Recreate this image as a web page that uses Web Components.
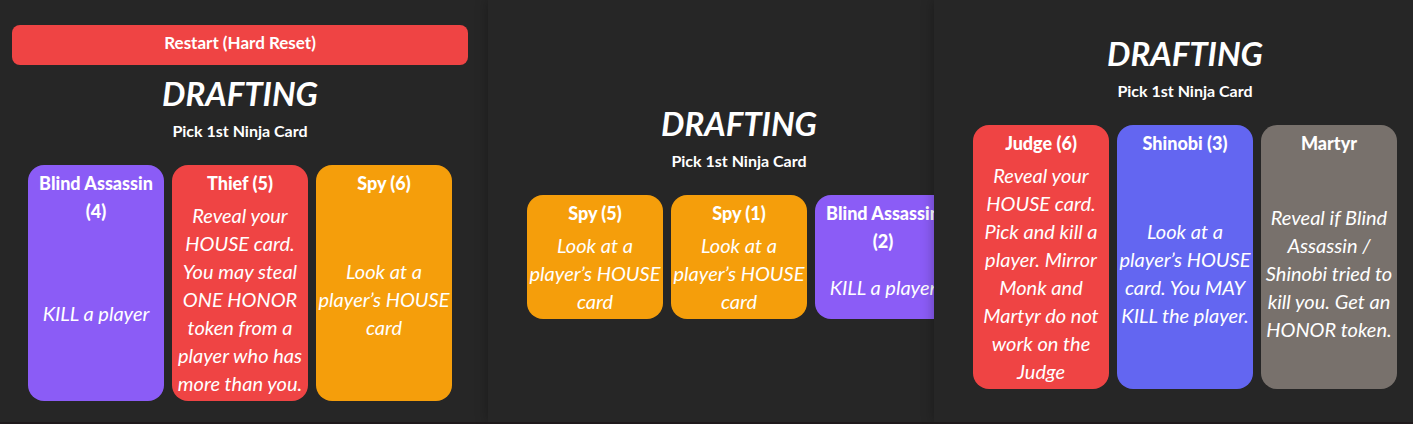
<!DOCTYPE html>
<html lang="en">
<head>
<meta charset="utf-8">
<title>Drafting</title>
<style>
  html, body { margin: 0; height: 100%; }
  body {
    background: #262626;
    color: #fff;
    font-family: Lato, "Liberation Sans", sans-serif;
    font-size: 20px;
    line-height: 28px;
    overflow: hidden;
  }
</style>
</head>
<body>
<draft-board>
  <draft-panel class="first">
    <reset-button slot="action">Restart (Hard Reset)</reset-button>
    <ninja-card color="violet" name="Blind Assassin (4)">KILL a player</ninja-card>
    <ninja-card color="red" name="Thief (5)">Reveal your HOUSE card. You may steal ONE HONOR token from a player who has more than you.</ninja-card>
    <ninja-card color="amber" name="Spy (6)">Look at a player’s HOUSE card</ninja-card>
  </draft-panel>
  <draft-panel class="second">
    <ninja-card color="amber" name="Spy (5)">Look at a player’s HOUSE card</ninja-card>
    <ninja-card color="amber" name="Spy (1)">Look at a player’s HOUSE card</ninja-card>
    <ninja-card color="violet" name="Blind Assassin (2)">KILL a player</ninja-card>
  </draft-panel>
  <draft-panel class="third">
    <ninja-card color="red" name="Judge (6)">Reveal your HOUSE card. Pick and kill a player. Mirror Monk and Martyr do not work on the Judge</ninja-card>
    <ninja-card color="indigo" name="Shinobi (3)">Look at a player’s HOUSE card. You MAY KILL the player.</ninja-card>
    <ninja-card color="stone" name="Martyr">Reveal if Blind Assassin / Shinobi tried to kill you. Get an HONOR token.</ninja-card>
  </draft-panel>
</draft-board>

<template id="board">
  <style>
    :host {
      display: grid;
      grid-template-columns: 488fr 446fr 479fr;
      min-height: 100vh;
      box-sizing: border-box;
      border-bottom: 2px solid #231e20;
    }
    ::slotted(draft-panel) { box-shadow: 0 0 12px rgba(0, 0, 0, .3); }
    ::slotted(.first) { --top: 25px; --stage: 480px; }
    ::slotted(.second) { --top: 103px; --stage: 502px; }
    ::slotted(.third) { --top: 33px; --stage: 502px; }
  </style>
  <slot></slot>
</template>

<template id="panel">
  <style>
    :host { display: block; min-width: 0; background: #262626; position: relative; }
    .clip { overflow: hidden; }
    .stage {
      width: var(--stage);
      box-sizing: border-box;
      padding: var(--top) 12px 20px;
      text-align: center;
    }
    h1 { margin: 0; font-size: 33px; line-height: 40px; font-weight: 700; font-style: italic; }
    p { margin: 4px 0 20px; font-size: 16px; line-height: 28px; font-weight: 700; }
    .cards { display: flex; justify-content: center; gap: 8px; }
  </style>
  <div class="clip">
    <section class="stage">
      <slot name="action"></slot>
      <h1>DRAFTING</h1>
      <p>Pick 1st Ninja Card</p>
      <div class="cards"><slot></slot></div>
    </section>
  </div>
</template>

<template id="reset">
  <style>
    :host { display: block; margin-bottom: 8px; }
    button {
      display: block;
      width: 100%;
      height: 40px;
      border: 0;
      border-radius: 8px;
      padding: 0 8px 4px;
      background: #ef4444;
      color: inherit;
      font: inherit;
      font-size: 17px;
      font-weight: 700;
      cursor: pointer;
    }
  </style>
  <button type="button"><slot></slot></button>
</template>

<template id="card">
  <style>
    :host { display: flex; flex: 0 0 136px; }
    :host([color="violet"]) { --fill: #8b5cf6; }
    :host([color="red"]) { --fill: #ef4444; }
    :host([color="amber"]) { --fill: #f59e0b; }
    :host([color="indigo"]) { --fill: #6366f1; }
    :host([color="stone"]) { --fill: #78716c; }
    button {
      display: flex;
      flex-direction: column;
      gap: 4px;
      width: 100%;
      border: 0;
      border-radius: 16px;
      padding: 4px 0;
      background: var(--fill);
      color: inherit;
      font: inherit;
      text-align: center;
      cursor: pointer;
    }
    .name { font-weight: 900; font-size: 18px; padding: 0 4px; align-self: stretch; }
    .text { flex: 1; display: flex; align-items: center; justify-content: center; align-self: stretch; font-style: italic; }
  </style>
  <button type="button">
    <span class="name"></span>
    <span class="text"><span><slot></slot></span></span>
  </button>
</template>

<script>
  class Templated extends HTMLElement {
    constructor() {
      super();
      const source = document.getElementById(this.constructor.template);
      this.attachShadow({ mode: "open" }).append(source.content.cloneNode(true));
    }
  }
  class DraftBoard extends Templated { static template = "board"; }
  class DraftPanel extends Templated { static template = "panel"; }
  class ResetButton extends Templated { static template = "reset"; }
  class NinjaCard extends Templated {
    static template = "card";
    connectedCallback() {
      this.shadowRoot.querySelector(".name").textContent = this.getAttribute("name");
    }
  }
  customElements.define("draft-board", DraftBoard);
  customElements.define("draft-panel", DraftPanel);
  customElements.define("reset-button", ResetButton);
  customElements.define("ninja-card", NinjaCard);
</script>
</body>
</html>
